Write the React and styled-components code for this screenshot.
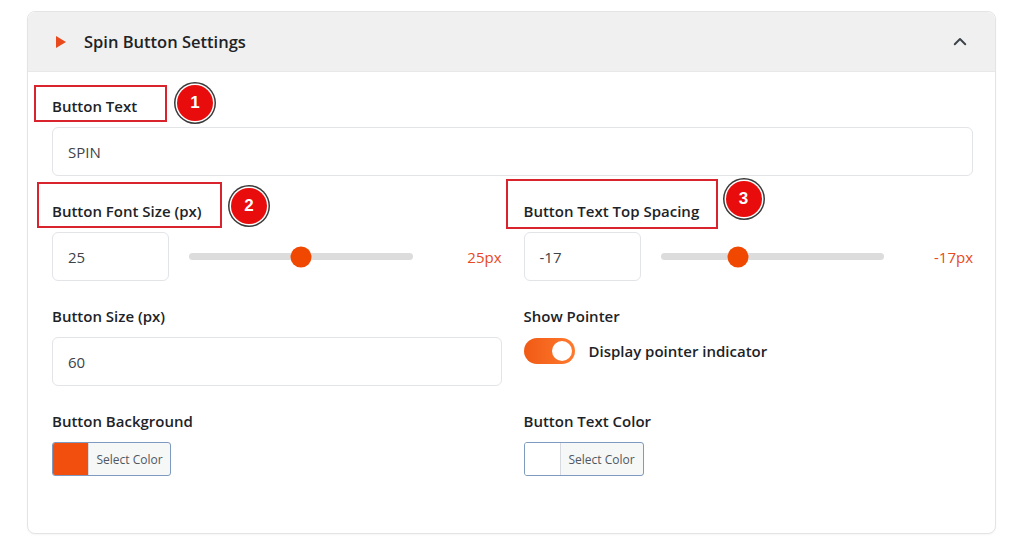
import React from 'react';
import styled, { createGlobalStyle } from 'styled-components';

const GlobalStyle = createGlobalStyle`
  body {
    margin: 0;
    background: #fff;
    font-family: "Open Sans", "Noto Sans", sans-serif;
    color: #1d2327;
  }
`;

const Page = styled.div`
  padding: 11px 28px 10px 27px;
`;

const Card = styled.section`
  border: 1px solid #e4e4e4;
  border-radius: 8px;
  background: #fff;
  box-shadow: 0 1px 2px rgba(0, 0, 0, 0.04);
`;

const Header = styled.header`
  height: 59px;
  display: flex;
  align-items: center;
  padding: 0 26px 0 28px;
  background: #f0f0f0;
  border-radius: 8px 8px 0 0;
  border-bottom: 1px solid #e8e8e8;
`;

const Arrow = styled.span`
  width: 0;
  height: 0;
  border-top: 6px solid transparent;
  border-bottom: 6px solid transparent;
  border-left: 10px solid #e8491d;
  margin-right: 18px;
`;

const Title = styled.h2`
  flex: 1;
  margin: 0;
  font-size: 16.5px;
  font-weight: 600;
  color: #1d2327;
`;

const Body = styled.div`
  display: grid;
  grid-template-columns: 1fr 1fr;
  column-gap: 22px;
  row-gap: 25px;
  padding: 24px 22px 57px 24px;
`;

const Field = styled.div`
  position: relative;
  display: flex;
  flex-direction: column;
  gap: 11px;
  grid-column: ${(p) => (p.$full ? '1 / -1' : 'auto')};
`;

const Label = styled.label`
  font-size: 15px;
  font-weight: 600;
  line-height: 20px;
  color: #1d2327;
`;

const TextInput = styled.div`
  box-sizing: border-box;
  height: 49px;
  width: ${(p) => p.$width || '100%'};
  flex-shrink: 0;
  display: flex;
  align-items: center;
  padding: 0 15px;
  border: 1px solid #e2e4e7;
  border-radius: 6px;
  font-size: 15px;
  color: #3c434a;
  background: #fff;
`;

const SliderRow = styled.div`
  display: flex;
  align-items: center;
`;

const Track = styled.div`
  position: relative;
  flex: 1;
  height: 7px;
  margin-left: 20px;
  border-radius: 4px;
  background: #dcdcdc;
`;

const Thumb = styled.span`
  position: absolute;
  top: 50%;
  width: 21px;
  height: 21px;
  border-radius: 50%;
  background: #f04800;
  transform: translate(-50%, -50%);
`;

const Value = styled.span`
  width: 89px;
  text-align: right;
  font-size: 15px;
  font-weight: 500;
  color: #e8491d;
`;

const ToggleRow = styled.div`
  display: flex;
  align-items: center;
  gap: 14px;
  height: 27px;
`;

const Toggle = styled.span`
  position: relative;
  width: 51px;
  height: 26px;
  border-radius: 13px;
  background: linear-gradient(90deg, #f05a14, #ff7a2e);
  &::after {
    content: '';
    position: absolute;
    right: 3px;
    top: 3px;
    width: 20px;
    height: 20px;
    border-radius: 50%;
    background: #fff;
  }
`;

const ToggleText = styled.span`
  font-size: 15px;
  font-weight: 600;
  color: #1d2327;
`;

const ColorButton = styled.div`
  box-sizing: border-box;
  display: flex;
  width: ${(p) => p.$width};
  height: 34px;
  border: 1px solid #7f9ac0;
  border-radius: 3px;
  overflow: hidden;
  background: #f6f7f7;
`;

const Swatch = styled.span`
  width: 35px;
  background: ${(p) => p.$color};
  border-right: 1px solid #d6d9dd;
`;

const ColorText = styled.span`
  flex: 1;
  display: flex;
  align-items: center;
  justify-content: center;
  font-size: 12px;
  color: #50575e;
`;

const Frame = styled.span`
  position: absolute;
  left: ${(p) => p.$x}px;
  top: ${(p) => p.$y}px;
  width: ${(p) => p.$w}px;
  height: ${(p) => p.$h}px;
  border: 2px solid #d9232d;
  box-sizing: border-box;
  pointer-events: none;
`;

const Badge = styled.span`
  position: absolute;
  left: ${(p) => p.$x}px;
  top: ${(p) => p.$y}px;
  width: 36px;
  height: 36px;
  border-radius: 50%;
  background: #e80c0c;
  box-shadow: 0 0 0 1.5px #fff, 0 0 0 3px #3a3a3a;
  color: #fff;
  font-size: 17px;
  font-weight: 700;
  display: flex;
  align-items: center;
  justify-content: center;
  font-family: "Liberation Sans", Arial, sans-serif;
`;

const Annotation = ({ n, frame, badge }) => (
  <>
    <Frame $x={frame[0]} $y={frame[1]} $w={frame[2]} $h={frame[3]} />
    <Badge $x={badge[0]} $y={badge[1]}>{n}</Badge>
  </>
);

const Slider = ({ value, pct }) => (
  <SliderRow>
    <TextInput $width="117px">{value}</TextInput>
    <Track>
      <Thumb style={{ left: `${pct}%` }} />
    </Track>
    <Value>{value}px</Value>
  </SliderRow>
);

const ChevronUp = () => (
  <svg width="18" height="18" viewBox="0 0 24 24" fill="none" stroke="#3c434a" strokeWidth="2.6" strokeLinecap="round" strokeLinejoin="round">
    <path d="M5 15l7-7 7 7" />
  </svg>
);

export default function App() {
  return (
    <Page>
      <GlobalStyle />
      <Card>
        <Header>
          <Arrow />
          <Title>Spin Button Settings</Title>
          <ChevronUp />
        </Header>
        <Body>
          <Field $full>
            <Label>Button Text</Label>
            <TextInput>SPIN</TextInput>
            <Annotation n="1" frame={[-18, -11, 133, 37]} badge={[125, -11]} />
          </Field>

          <Field>
            <Label>Button Font Size (px)</Label>
            <Slider value="25" pct={50} />
            <Annotation n="2" frame={[-15, -19, 185, 46]} badge={[179, -13]} />
          </Field>

          <Field>
            <Label>Button Text Top Spacing</Label>
            <Slider value="-17" pct={34.5} />
            <Annotation n="3" frame={[-18, -22, 212, 50]} badge={[202, -20]} />
          </Field>

          <Field>
            <Label>Button Size (px)</Label>
            <TextInput>60</TextInput>
          </Field>

          <Field>
            <Label>Show Pointer</Label>
            <ToggleRow>
              <Toggle />
              <ToggleText>Display pointer indicator</ToggleText>
            </ToggleRow>
          </Field>

          <Field>
            <Label>Button Background</Label>
            <ColorButton $width="119px">
              <Swatch $color="#f24e0e" />
              <ColorText>Select Color</ColorText>
            </ColorButton>
          </Field>

          <Field>
            <Label>Button Text Color</Label>
            <ColorButton $width="120px">
              <Swatch $color="#fff" />
              <ColorText>Select Color</ColorText>
            </ColorButton>
          </Field>
        </Body>
      </Card>
    </Page>
  );
}
